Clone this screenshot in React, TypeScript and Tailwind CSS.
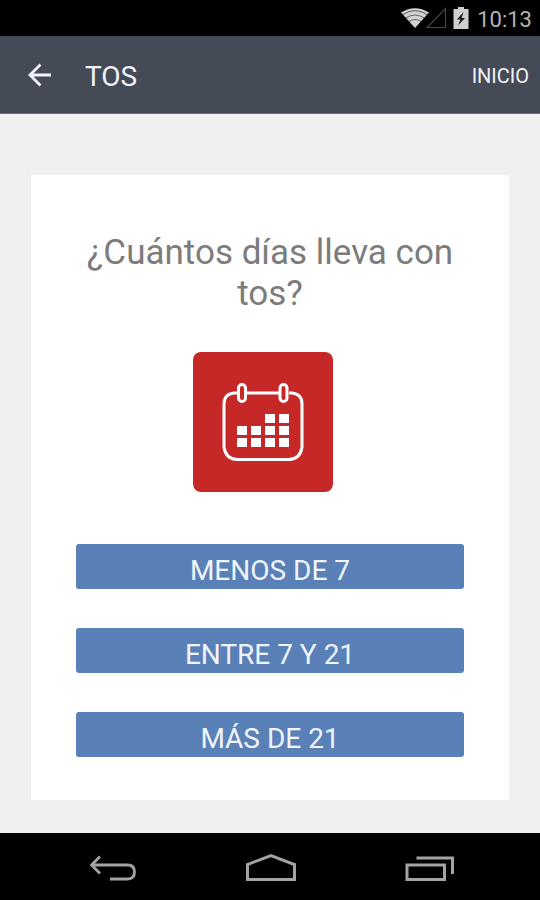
import React, { useState } from 'react';

const options = ['MENOS DE 7', 'ENTRE 7 Y 21', 'MÁS DE 21'];

const StatusBar: React.FC = () => (
  <div className="flex h-9 shrink-0 items-center justify-end bg-black pr-2 text-[#b4b4b4]">
    {/* Wifi */}
    <svg width="28" height="22" viewBox="0 0 28 22" aria-hidden="true">
      <path d="M0 5.5 Q14 -3 28 5.5 L14 21Z" fill="#d2d2d2" />
      <g fill="none" stroke="#000" strokeOpacity="0.55" strokeWidth="1.1">
        <path d="M1.5 8 Q14 -0.5 26.5 8" />
        <path d="M4 11.5 Q14 4.5 24 11.5" />
        <path d="M7 15 Q14 10 21 15" />
      </g>
    </svg>
    {/* No signal */}
    <svg className="-ml-1" width="22" height="22" viewBox="0 0 22 22" aria-hidden="true">
      <path d="M2 20.5 L20.5 1.5 V20.5Z" fill="none" stroke="#444" strokeWidth="1.2" />
    </svg>
    {/* Battery */}
    <svg className="ml-1.5" width="16" height="22" viewBox="0 0 16 22" aria-hidden="true">
      <path d="M5 0h6v2h4.5v20H0.5V2H5z" fill="#cfcfcf" />
      <path d="M10.5 5 L4 12.5 H7.5 L5 18.5 L12 11 H8.5Z" fill="#111" />
    </svg>
    <span className="ml-2 pt-0.5 text-[22px]">10:13</span>
  </div>
);

const Header: React.FC = () => (
  <header className="flex h-[78px] shrink-0 items-center border-b border-[#6d727b] bg-[#444a56] pr-[11px] pl-7 text-[#f0f4fb]">
    <button type="button" aria-label="Volver">
      <svg width="24" height="24" viewBox="0 0 24 24" fill="none" stroke="currentColor" strokeWidth="2.8" aria-hidden="true">
        <path d="M23 12H2M12.5 1.5L2 12L12.5 22.5" />
      </svg>
    </button>
    <h1 className="ml-[33px] pt-1 text-[28px]">TOS</h1>
    <a href="#inicio" className="ml-auto pt-0.5 text-xl">
      INICIO
    </a>
  </header>
);

const CalendarIcon: React.FC = () => (
  <svg width="82" height="80" viewBox="0 0 82 80" fill="none" stroke="#fff" aria-hidden="true">
    <path
      d="M15 11H12Q2 12 2 22V65Q3.5 77 15 77.5H67Q78.5 77 80 65V22Q80 12 70 11H67M25 11H57"
      strokeWidth="3"
    />
    <rect x="16.5" y="2.5" width="7" height="17" rx="3.5" strokeWidth="3" />
    <rect x="58" y="2.5" width="7" height="17" rx="3.5" strokeWidth="3" />
    <path
      d="M43 32h10v9H43zM57 32h10v9H57zM15 44h10v9H15zM29 44h10v9H29zM43 44h10v9H43zM57 44h10v9H57zM15 56h10v9H15zM29 56h10v9H29zM43 56h10v9H43zM57 56h10v9H57z"
      fill="#fff"
      stroke="none"
    />
  </svg>
);

const NavBar: React.FC = () => (
  <nav className="flex h-[67px] shrink-0 items-center justify-between bg-black pt-0.5 pr-[85px] pl-[88px] text-[#a3a3a3]">
    <button type="button" aria-label="Atrás">
      <svg width="48" height="30" viewBox="0 0 48 30" fill="none" stroke="currentColor" strokeWidth="2.8" aria-hidden="true">
        <path d="M3 12H39.5Q46.5 12 46.5 19T39.5 26H22M12 3.5L3.5 12L12 20.5" />
      </svg>
    </button>
    <button type="button" aria-label="Inicio">
      <svg width="52" height="30" viewBox="0 0 52 30" fill="none" stroke="currentColor" strokeWidth="3" aria-hidden="true">
        <path d="M2.5 26.5V11.5L26 2.5L49.5 11.5V26.5Z" />
      </svg>
    </button>
    <button type="button" aria-label="Recientes">
      <svg width="50" height="30" viewBox="0 0 50 30" fill="none" stroke="currentColor" strokeWidth="3" aria-hidden="true">
        <path d="M2 12H39.5V26.5H2ZM11.5 5H47.5V21" />
      </svg>
    </button>
  </nav>
);

const App: React.FC = () => {
  const [selected, setSelected] = useState<string>('');

  return (
    <div className="flex min-h-screen flex-col bg-[#f0f0f0] font-['Roboto','Liberation_Sans',sans-serif]">
      <StatusBar />
      <Header />
      <main className="flex-1 px-[31px] pt-[61px] pb-8">
        <section className="bg-white px-[45px] pt-[57px] pb-[43px]">
          <h2 className="text-center text-[35px] leading-[41px] text-[#7c7c7c]">
            ¿Cuántos días lleva con tos?
          </h2>
          <div className="flex justify-center pt-[38px] pr-[14px]">
            <div className="flex size-[140px] items-center justify-center rounded-lg bg-[#c62828]">
              <CalendarIcon />
            </div>
          </div>
          <div className="mt-[52px] flex flex-col gap-[39px]">
            {options.map((option) => (
              <button
                key={option}
                type="button"
                aria-pressed={selected === option}
                onClick={() => setSelected(option)}
                className="h-[45px] w-full rounded-[3px] bg-[#5a80b8] pt-2 text-[28px] leading-8 text-[#f0f4fb]"
              >
                {option}
              </button>
            ))}
          </div>
        </section>
      </main>
      <NavBar />
    </div>
  );
};

export default App;
